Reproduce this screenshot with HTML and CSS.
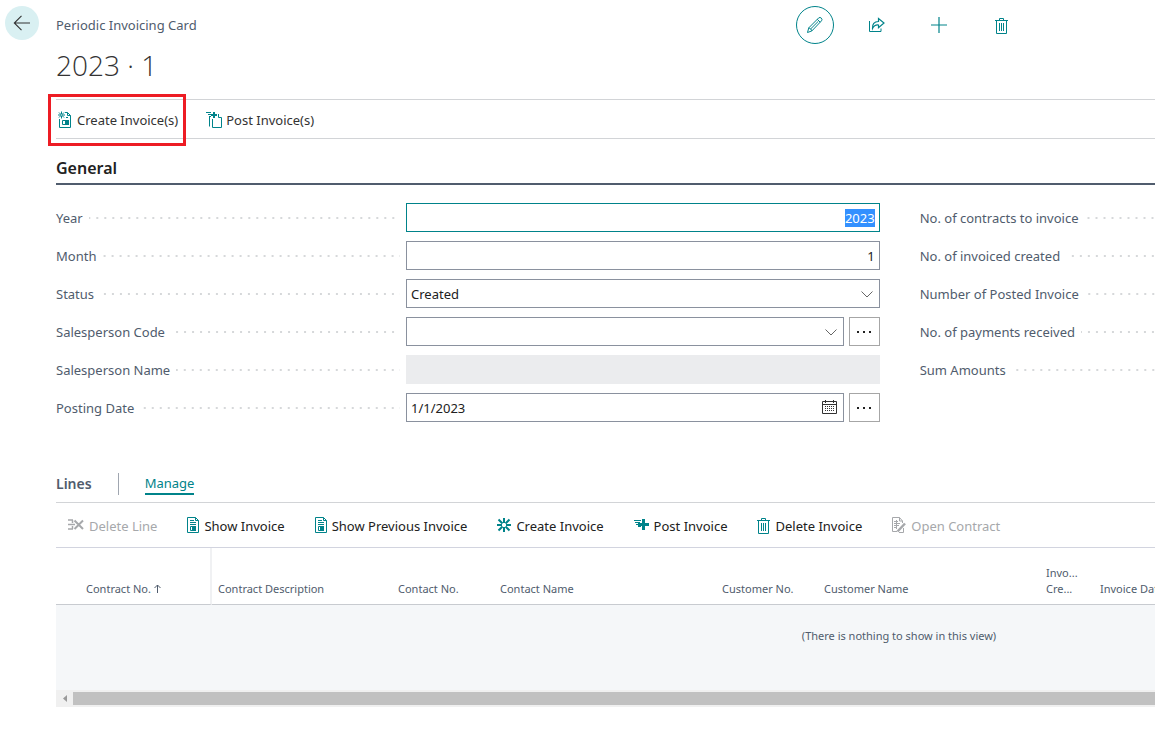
FILE: index.html
```html
<!DOCTYPE html>
<html lang="en">
<head>
<meta charset="utf-8">
<title>Periodic Invoicing Card</title>
<link rel="stylesheet" href="styles.css">
</head>
<body>
<svg class="sprite" aria-hidden="true">
  <symbol id="i-trash" viewBox="0 0 13 17"><path d="M0 3.500h13M4.500 3V1.500h4V3M1.500 4v12.500h10V4M4.500 6v8M6.500 6v8M8.500 6v8" fill="none" stroke="currentColor"/></symbol>
  <symbol id="i-doc" viewBox="0 0 12 16"><path d="M.5 .5h8l3 3v12H.5zM8.500 .5v3h3M3 3.500h4M3 5.500h6M3 7.500h6" fill="none" stroke="currentColor"/><path d="M3.500 9.500h5v4h-5z" fill="none" stroke="currentColor"/><path d="M5 9h4v5H5z" fill="currentColor"/></symbol>
  <symbol id="i-down" viewBox="0 0 12 7"><path d="M.5 .5L6 6 11.500 .5" fill="none" stroke="currentColor"/></symbol>
  <symbol id="i-dots" viewBox="0 0 16 4"><path d="M1 1h2v2H1zM7 1h2v2H7zM13 1h2v2h-2z" fill="currentColor"/></symbol>
</svg>
<main class="page">
  <header class="top">
    <button class="back" aria-label="Back"><svg width="18" height="16" viewBox="0 0 18 16"><path d="M8.500 .8L1.300 8l7.200 7.200M1.300 8H17" fill="none" stroke="currentColor" stroke-width="1.100"/></svg></button>
    <div class="caption">Periodic Invoicing Card</div>
    <div class="tools">
      <button class="tool tool-ring" aria-label="Edit"><svg width="18" height="18" viewBox="0 0 18 18"><path d="M1.500 16.500l1.300-4.700L12.700 1.900q1.300-1 2.600.2t.2 2.700L5.900 14.900zM2.800 11.800q2.300.6 3.100 3.100M11.300 3.300l2.900 2.900M4.700 12.900l7.600-7.600" fill="none" stroke="currentColor"/></svg></button>
      <button class="tool" aria-label="Share"><svg width="18" height="16" viewBox="0 0 18 16"><path d="M1.500 4v10.500h11.500V11.500" fill="none" stroke="currentColor"/><path d="M4.500 11.500Q4 4.700 10.500 4.500V1.500L16 6l-5.500 4.800V8Q6.500 7.500 4.500 11.500z" fill="none" stroke="currentColor" stroke-width="1.200"/></svg></button>
      <button class="tool" aria-label="New"><svg width="16" height="16" viewBox="0 0 16 16"><path d="M8 0v16M0 8h16" stroke="currentColor" stroke-width="1.200"/></svg></button>
      <button class="tool" aria-label="Delete"><svg width="13" height="17"><use href="#i-trash"/></svg></button>
    </div>
  </header>
  <h1 class="title">2023 · 1</h1>

  <nav class="commands" aria-label="Actions">
    <button class="command marked"><svg width="15" height="17" viewBox="0 0 15 17"><path d="M1.500 8v8.500h11V4.500l-3-3H7M9.500 1.500v3h3M8 6.500h2" fill="none" stroke="currentColor"/><path d="M4.500 9.500h6v4h-6z" fill="none" stroke="currentColor"/><path d="M7 9h4v5H7z" fill="currentColor"/><path d="M3.500 .5v7M0 4h7M1 1.500l5 5M6 1.500l-5 5" stroke="currentColor"/><path d="M3 3.500h1v1H3z" fill="#fff"/></svg>Create Invoice(s)</button>
    <button class="command"><svg width="16" height="17" viewBox="0 0 16 17"><path d="M3.500 5v10.500M6.500 8v8.500h9V6.500M12.500 3v3.500h3" fill="none" stroke="currentColor"/><path d="M8 1v6M5 4h6" stroke="currentColor" stroke-width="2"/><path d="M0 1.500h5M2 3.500h3M3 5.500h2" stroke="currentColor"/></svg>Post Invoice(s)</button>
  </nav>

  <section>
    <h2 class="section-title">General</h2>
    <form class="form">
      <div class="fields">
        <div class="field"><label class="label" for="year"><span>Year</span></label><input class="box number" id="year" value="2023" autofocus></div>
        <div class="field"><label class="label" for="month"><span>Month</span></label><input class="box number" id="month" value="1"></div>
        <div class="field"><label class="label" for="status"><span>Status</span></label><div class="control"><select class="box" id="status"><option>Created</option></select><svg class="mark down" width="12" height="7"><use href="#i-down"/></svg></div></div>
        <div class="field"><label class="label" for="code"><span>Salesperson Code</span></label><div class="pair"><div class="control"><input class="box" id="code"><svg class="mark down" width="12" height="7"><use href="#i-down"/></svg></div><button type="button" class="more" aria-label="Look up salesperson"><svg width="16" height="4"><use href="#i-dots"/></svg></button></div></div>
        <div class="field"><label class="label" for="name"><span>Salesperson Name</span></label><input class="box readonly" id="name" readonly></div>
        <div class="field"><label class="label" for="date"><span>Posting Date</span></label><div class="pair"><div class="control"><input class="box" id="date" value="1/1/2023"><svg class="mark" width="15" height="15" viewBox="0 0 15 15"><path d="M.5 1.500h14v12H.5zM.5 4.500h14M3.500 0v3M11.500 0v3" fill="none" stroke="currentColor"/><path d="M3 6.500h10M3 8.500h10M3 10.500h10" stroke="currentColor" stroke-dasharray="1 1"/></svg></div><button type="button" class="more" aria-label="Posting date options"><svg width="16" height="4"><use href="#i-dots"/></svg></button></div></div>
      </div>
      <div class="fields totals">
        <div class="field label"><span>No. of contracts to invoice</span></div>
        <div class="field label"><span>No. of invoiced created</span></div>
        <div class="field label"><span>Number of Posted Invoice</span></div>
        <div class="field label"><span>No. of payments received</span></div>
        <div class="field label"><span>Sum Amounts</span></div>
      </div>
    </form>
  </section>

  <section>
    <div class="lines-head">
      <h2 class="lines-title">Lines</h2>
      <button class="tab">Manage</button>
    </div>
    <div class="line-tools">
      <button class="line-tool" disabled><svg width="16" height="14" viewBox="0 0 16 14"><path d="M0 2h5M0 11h5M0 6.500h7M4.500 2v3M4.500 8v3" stroke="currentColor" stroke-width="1.500"/><path d="M6.500 2.500l8.500 8.500M15 2.500L6.500 11" stroke="currentColor" stroke-width="2"/></svg>Delete Line</button>
      <button class="line-tool"><svg width="12" height="16"><use href="#i-doc"/></svg>Show Invoice</button>
      <button class="line-tool"><svg width="12" height="16"><use href="#i-doc"/></svg>Show Previous Invoice</button>
      <button class="line-tool"><svg width="14" height="14" viewBox="0 0 14 14"><path d="M7 0v5M7 9v5M0 7h5M9 7h5M1.500 1.500l4 4M8.500 8.500l4 4M12.500 1.500l-4 4M5.500 8.500l-4 4" stroke="currentColor" stroke-width="2"/></svg>Create Invoice</button>
      <button class="line-tool"><svg width="15" height="14" viewBox="0 0 15 14"><path d="M9.500 1v11M4 6.500h11" stroke="currentColor" stroke-width="3"/><path d="M0 2.500h7M1 4.500h5M2 6.500h3M4 8.500h3" stroke="currentColor"/></svg>Post Invoice</button>
      <button class="line-tool"><svg width="13" height="17"><use href="#i-trash"/></svg>Delete Invoice</button>
      <button class="line-tool" disabled><svg width="14" height="16" viewBox="0 0 14 16"><path d="M10.500 6V4l-3-3.500H.5v14H5M7.500 .5V4h3M2 4.500h4M2 6.500h6M2 8.500h5M2 10.500h3M4.500 3v9" fill="none" stroke="currentColor"/><path d="M5.500 14.500L13 6.500" stroke="currentColor" stroke-width="2.500"/><path d="M7 15.500h4.500V11" fill="none" stroke="currentColor"/></svg>Open Contract</button>
    </div>
    <table class="grid">
      <colgroup><col class="c-first"><col class="c-mid"><col class="c-no"><col class="c-name"><col class="c-no"><col class="c-name"><col class="c-flag"><col></colgroup>
      <thead><tr>
        <th>Contract No. <svg class="sort" width="7" height="9" viewBox="0 0 7 9"><path d="M3.500 9V1M.5 4l3-3 3 3" fill="none" stroke="currentColor"/></svg></th>
        <th>Contract Description</th><th>Contact No.</th><th>Contact Name</th><th>Customer No.</th><th>Customer Name</th><th>Invo...<br>Cre...</th><th>Invoice Date</th>
      </tr></thead>
      <tbody><tr><td colspan="8">(There is nothing to show in this view)</td></tr></tbody>
    </table>
    <div class="scroll"><button class="scroll-left" aria-label="Scroll left"><svg width="4" height="7" viewBox="0 0 4 7"><path d="M4 0v7L0 3.500z" fill="currentColor"/></svg></button><div class="thumb"></div></div>
  </section>
</main>
<script src="focus.js"></script>
</body>
</html>
```
FILE: focus.js
```js
const year = document.getElementById("year");
year.focus();
year.select();
```
FILE: styles.css
```css
* { box-sizing: border-box; }
body {
  margin: 0;
  background: #fff;
  color: #212121;
  font: 13px/20px "Noto Sans", "Open Sans", sans-serif;
  overflow-x: hidden;
}
button, input, select { font: inherit; color: inherit; }
button { border: 0; padding: 0; background: none; white-space: nowrap; }
svg { flex: none; display: block; }
h1, h2 { margin: 0; }
.sprite { position: absolute; width: 0; height: 0; }
.page { padding-left: 56px; }

.top { display: flex; align-items: center; height: 50px; }
.back {
  display: grid; place-items: center;
  width: 34px; height: 34px;
  margin: 0 17px 4px -51px;
  border-radius: 50%;
  background: #d9f0f2; color: #333;
}
.caption { flex: 1; color: #505c6d; }
.tools { display: flex; gap: 24px; padding-right: 135px; color: #00838a; }
.tool { display: grid; place-items: center; width: 38px; height: 38px; border-radius: 50%; }
.tool-ring { border: 1px solid #00838a; }
.title { height: 49px; font: 300 28px/30px "Open Sans", "Noto Sans", sans-serif; color: #333; }

.commands {
  display: flex; gap: 28px;
  height: 40px;
  border-top: 1px solid #d2d4d7;
  border-bottom: 1px solid #d2d4d7;
  color: #333;
}
.command { position: relative; display: flex; align-items: center; gap: 4px; padding-top: 2px; }
.command svg { color: #00838a; margin-bottom: 2px; }
.marked { padding-left: 2px; }
.marked::after {
  content: ""; position: absolute;
  inset: -6px -8px -8px;
  border: 3px solid #ed1c24;
}

.section-title {
  margin-top: 17px; padding-bottom: 3px;
  border-bottom: 2px solid #505c6d;
  font-size: 16px; line-height: 24px; font-weight: 600;
}
.form { display: grid; grid-template-columns: minmax(0, 7fr) minmax(0, 2fr); gap: 40px; padding-top: 18px; }
.fields { display: grid; gap: 9px; align-content: start; }
.field { display: flex; align-items: center; height: 29px; }
.label { display: flex; align-items: center; gap: 6px; width: 350px; padding-right: 6px; color: #505c6d; white-space: nowrap; }
.label::after {
  content: ""; flex: 1; height: 2px;
  background: linear-gradient(to right, #d6d8da 2px, transparent 2px) right center / 8px 2px repeat-x;
}
.totals .label { width: auto; padding-right: 0; }
.totals .label::after { background-position: right -5px center; }
.box {
  flex: 1; min-width: 0; width: 100%; height: 29px;
  padding: 0 4px;
  border: 1px solid #8a919e; border-radius: 0;
  background: #fff; outline: 0; appearance: none;
}
.box:focus { border-color: #00838a; }
.box::selection { background: #3390ff; color: #fff; }
.number { text-align: right; }
.readonly { border-color: #ebecee; background: #ebecee; }
.control { position: relative; flex: 1; display: flex; }
.mark { position: absolute; right: 7px; top: 7px; pointer-events: none; color: #333; }
.down { top: 12px; color: #666; }
.pair { flex: 1; display: flex; gap: 5px; }
.more { display: grid; place-items: center; width: 31px; height: 29px; border: 1px solid #a6a6a6; }

.lines-head { display: flex; align-items: center; height: 39px; margin-top: 42px; padding-top: 1px; border-bottom: 1px solid #d2d4d7; }
.lines-title { padding-right: 26px; border-right: 1px solid #a0a6b0; font-size: 14px; line-height: 22px; font-weight: 600; color: #505c6d; }
.tab { margin-left: 26px; border-bottom: 2px solid #00838a; color: #00838a; }
.line-tools { display: flex; gap: 30px; height: 45px; padding-left: 12px; border-bottom: 1px solid #d2d4df; }
.line-tool { display: flex; align-items: center; gap: 5px; padding-top: 2px; }
.line-tool svg { color: #00838a; margin-bottom: 2px; }
.line-tool:disabled, .line-tool:disabled svg { color: #a6a8ab; }

.grid { width: 100%; table-layout: fixed; border-collapse: separate; border-spacing: 0; font-size: 11px; line-height: 16px; color: #505c6d; }
.c-first { width: 156px; }
.c-mid { width: 180px; }
.c-no { width: 102px; }
.c-name { width: 222px; }
.c-flag { width: 54px; }
.grid th {
  height: 57px; padding: 0 0 7px 6px;
  border-bottom: 1px solid #c8cbd0;
  font-weight: 400; text-align: left; vertical-align: bottom;
  white-space: nowrap; overflow: hidden;
}
.grid th:first-child { padding-left: 30px; border-right: 2px solid #f0f1f3; }
.sort { display: inline-block; }
.grid td { height: 85px; padding: 0 0 24px 587px; background: #f5f7f9; text-align: center; white-space: nowrap; }
.scroll { display: flex; align-items: center; height: 17px; background: #f0f0f0; }
.scroll-left { display: grid; place-items: center; width: 17px; height: 17px; color: #999; }
.thumb { flex: 1; height: 13px; background: #c1c1c1; }
```
